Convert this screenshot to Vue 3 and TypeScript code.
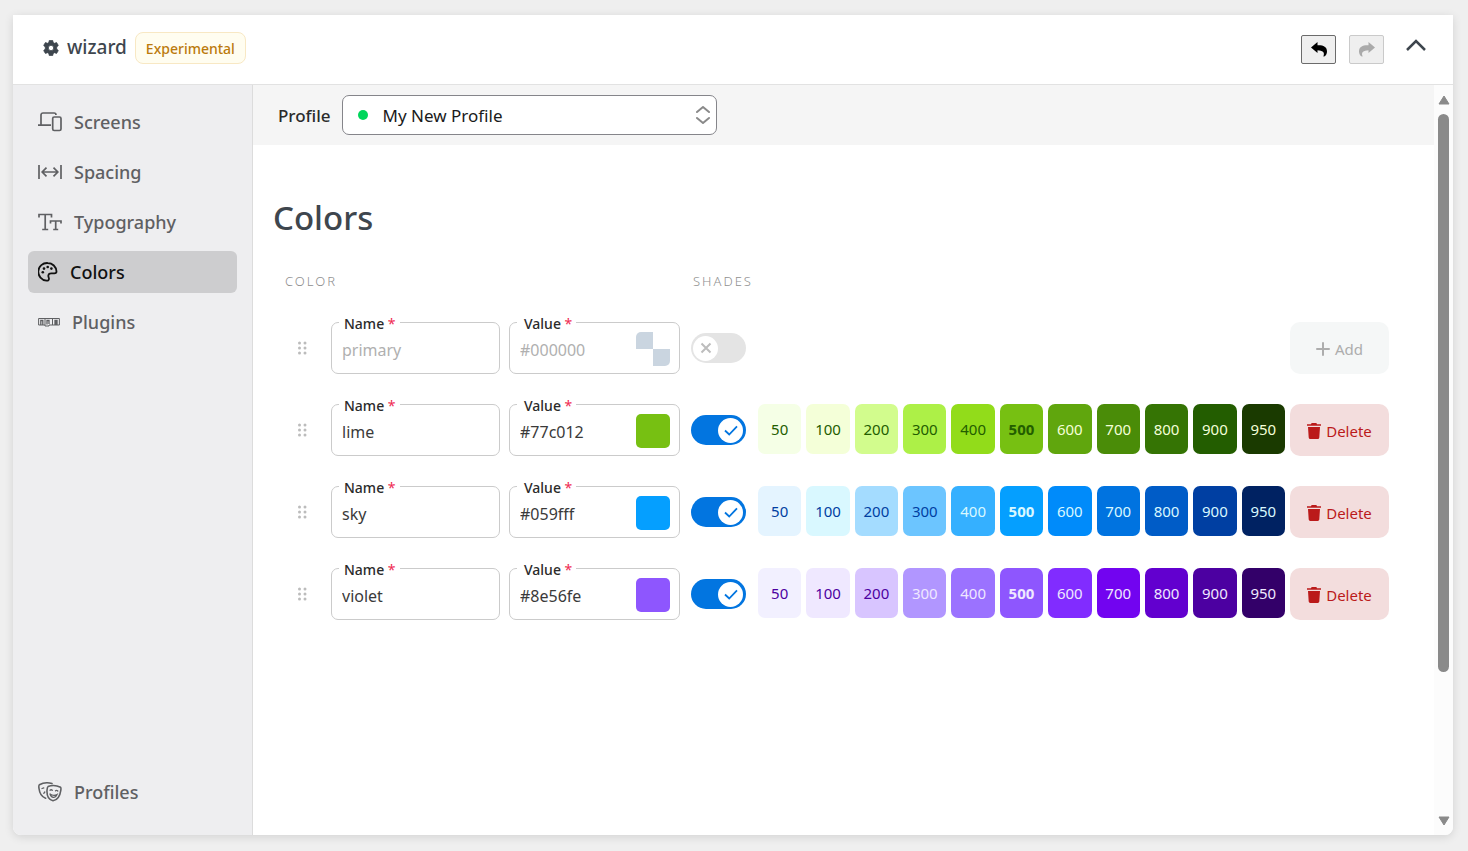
<script setup lang="ts">
import { ref } from 'vue'

interface Shade {
  label: string
  bg: string
  fg: string
}

interface ColorRow {
  name: string
  value: string
  shades: Shade[]
}

const steps = ['50', '100', '200', '300', '400', '500', '600', '700', '800', '900', '950']

function shades(colors: string[], dark: string, light: string, firstLight: number): Shade[] {
  return colors.map((bg, i) => ({ label: steps[i], bg, fg: i < firstLight ? dark : light }))
}

const rows = ref<ColorRow[]>([
  {
    name: 'lime',
    value: '#77c012',
    shades: shades(
      ['#f5ffe6', '#f4ffd8', '#d2fc8d', '#adf047', '#92dc1a', '#77c012', '#60a60d', '#4a8c08', '#357404', '#235d00', '#1a3a00'],
      '#235d00', '#f4ffd8', 6,
    ),
  },
  {
    name: 'sky',
    value: '#059fff',
    shades: shades(
      ['#e4f4ff', '#d9f8ff', '#a4dcff', '#6cc5ff', '#35b0ff', '#059fff', '#008bfa', '#0073e0', '#005cc7', '#003fa2', '#002262'],
      '#003fa2', '#d9f8ff', 4,
    ),
  },
  {
    name: 'violet',
    value: '#8e56fe',
    shades: shades(
      ['#f2f0ff', '#efe8ff', '#d8c5ff', '#b196ff', '#9b72ff', '#8e56fe', '#812cff', '#7204f0', '#6200cf', '#4c00a1', '#330069'],
      '#4c00a1', '#efe8ff', 3,
    ),
  },
])

const navItems = ['Screens', 'Spacing', 'Typography', 'Colors', 'Plugins']
const active = ref('Colors')
const draftName = ref('')
const draftValue = ref('')
const profile = ref('My New Profile')
</script>

<template>
  <div class="page">
    <div class="panel">
      <header class="top">
        <svg class="gear" viewBox="0 0 16 16" width="16" height="16">
          <path fill="currentColor" fill-rule="evenodd" stroke="currentColor" stroke-width=".8" stroke-linejoin="round" d="M6.300.4h3.400l.5 2.100 1.300.8 2.100-.7 1.700 2.900L13.700 7v2l1.600 1.500-1.700 2.900-2.100-.7-1.300.8-.5 2.100H6.300l-.5-2.100-1.300-.8-2.100.7L.7 10.500 2.300 9V7L.7 5.500l1.700-2.900 2.100.7 1.300-.8zM8 5.300a2.700 2.700 0 1 0 0 5.400 2.700 2.700 0 0 0 0-5.400z" />
        </svg>
        <span class="brand">wizard</span>
        <span class="badge">Experimental</span>
        <div class="actions">
          <button type="button" class="history" aria-label="Undo">
            <svg viewBox="0 0 16 16" width="16" height="16"><path fill="currentColor" d="M0 6.500 6.500 1v3.300C12 4 16 5.800 16 10.400c0 2.200-1 4-2.800 5.100-.5.300-1-.1-.7-.6C14 11.500 11.500 9.400 6.500 9.300V12z" /></svg>
          </button>
          <button type="button" class="history" aria-label="Redo" disabled>
            <svg viewBox="0 0 16 16" width="16" height="16"><path fill="currentColor" d="M16 6.500 9.500 1v3.300C4 4 0 5.800 0 10.400c0 2.200 1 4 2.800 5.100.5.300 1-.1.700-.6C2 11.500 4.500 9.400 9.500 9.300V12z" /></svg>
          </button>
          <button type="button" class="collapse" aria-label="Collapse">
            <svg viewBox="0 0 20 12" width="20" height="12"><path fill="none" stroke="currentColor" stroke-width="2.500" d="m1 11 9-9 9 9" /></svg>
          </button>
        </div>
      </header>

      <div class="body">
        <nav class="side">
          <a v-for="item in navItems" :key="item" href="#" class="link" :class="{ active: item === active }" @click.prevent="active = item">
            <svg v-if="item === 'Screens'" class="icon" viewBox="0 0 24 20" width="24" height="20" fill="none" stroke="currentColor" stroke-width="1.700">
              <path d="M3 13V3a2 2 0 0 1 2-2h11a2 2 0 0 1 2 2M0 13.200h13" />
              <rect x="14.700" y="5" width="8.300" height="13.500" rx="1.500" />
            </svg>
            <svg v-else-if="item === 'Spacing'" class="icon" viewBox="0 0 24 16" width="24" height="16" fill="none" stroke="currentColor" stroke-width="1.700">
              <path d="M1 1v14M23 1v14M4.500 8h15M8.500 3.700 4.200 8l4.300 4.300M15.500 3.700 19.800 8l-4.300 4.300" />
            </svg>
            <svg v-else-if="item === 'Typography'" class="icon" viewBox="0 0 24 18" width="24" height="18" fill="none" stroke="currentColor" stroke-width="1.700">
              <path d="M1 4.500V1.500h12.500v3M7.200 1.500v15M4.200 16.500h6M12.500 10.500V8H23v2.500M17.700 8v8.500M15.200 16.500h5" />
            </svg>
            <svg v-else-if="item === 'Colors'" class="icon" viewBox="0 0 20 20" width="20" height="20">
              <path fill="none" stroke="currentColor" stroke-width="1.800" d="M18.500 9.500C18.300 4.800 14.500 1 9.700 1a8.800 8.800 0 0 0-1.200 17.600c1.600.3 2.500-.5 2.500-1.800 0-1.200-1-2-.6-3.600.3-1.300 1.400-1.800 2.900-1.800h3c1.400 0 2.200-.6 2.200-1.900z" />
              <g fill="currentColor"><circle cx="4.800" cy="10.300" r="1.300" /><circle cx="6" cy="6.600" r="1.300" /><circle cx="9.700" cy="5" r="1.300" /><circle cx="13.400" cy="6.600" r="1.300" /></g>
            </svg>
            <svg v-else class="icon" viewBox="0 0 22 10" width="22" height="10" fill="none" stroke="currentColor">
              <path d="M.6 1.500h20.800v6.500H11V9H7V8H.6zM7 1.500V8M14.500 1.500V8" />
              <path stroke-width="1.300" d="M2.800 8V3.500h2V8M9 7.500V3.500h2V7M17 8V3.500h2V8M18 3.500V8" />
            </svg>
            <span>{{ item }}</span>
          </a>
          <a href="#" class="link last" @click.prevent>
            <svg class="icon" viewBox="0 0 24 20" width="24" height="20" fill="none" stroke="currentColor" stroke-width="1.600" stroke-linecap="round">
              <path d="M14 1.600C9.800.3 5.200.7 1.400 2.800.5 3.300.8 5 1 6.500 1.600 11.300 3.800 15 7.600 16.200" />
              <path d="M10 4.600c4.400-1.700 8.600-1.200 12.600.7.500.4.400 1.700.2 3-.8 5.700-3.500 9.700-7.800 10.500-4.400-1-6.300-5-6-10.500.1-1.500.2-3.200 1-3.700z" />
              <path stroke-width="1.300" d="M12 8.200q1.200-1 2.300 0M17.500 8.800q1.200-1 2.300.2M12 12q3.500 2.300 7 .5-1.400 3-3.600 2.900-2.400-.2-3.400-3.400M4 6.500l1.800-.6M5.800 11.300l1-1.300" />
            </svg>
            <span>Profiles</span>
          </a>
        </nav>

        <main class="main">
          <div class="content">
            <div class="profile-bar">
              <label for="profile">Profile</label>
              <div class="select-wrap">
                <span class="dot"></span>
                <select id="profile" v-model="profile"><option>My New Profile</option></select>
                <svg class="updown" viewBox="0 0 14 18" width="14" height="18" fill="none" stroke="currentColor" stroke-width="2" stroke-linecap="round" stroke-linejoin="round">
                  <path d="m1 6 6-5 6 5M1 12l6 5 6-5" />
                </svg>
              </div>
            </div>

            <section class="colors">
              <h1>Colors</h1>
              <div class="grid heads">
                <span class="head-color">Color</span>
                <span class="head-shades">Shades</span>
              </div>

              <div class="grid row">
                <svg class="grip" viewBox="0 0 9 14" width="9" height="14" fill="currentColor"><circle cx="1.500" cy="2" r="1.500" /><circle cx="7" cy="2" r="1.500" /><circle cx="1.500" cy="7" r="1.500" /><circle cx="7" cy="7" r="1.500" /><circle cx="1.500" cy="12" r="1.500" /><circle cx="7" cy="12" r="1.500" /></svg>
                <div class="field">
                  <label for="name-new">Name <em>*</em></label>
                  <input id="name-new" v-model="draftName" type="text" placeholder="primary" />
                </div>
                <div class="field value">
                  <label for="value-new">Value <em>*</em></label>
                  <input id="value-new" v-model="draftValue" type="text" placeholder="#000000" />
                  <span class="swatch empty"></span>
                </div>
                <label class="toggle">
                  <input type="checkbox" aria-label="Shades for new color" />
                  <span class="knob"><svg viewBox="0 0 12 12" width="12" height="12"><path fill="none" stroke="currentColor" stroke-width="2" d="m1.500 1.500 9 9M10.500 1.500l-9 9" /></svg></span>
                </label>
                <div class="shades"></div>
                <button type="button" class="act add" disabled>
                  <svg viewBox="0 0 14 14" width="14" height="14"><path fill="none" stroke="currentColor" stroke-width="2" stroke-linecap="round" d="M7 1v12M1 7h12" /></svg>
                  Add
                </button>
              </div>

              <div v-for="(row, i) in rows" :key="i" class="grid row">
                <svg class="grip" viewBox="0 0 9 14" width="9" height="14" fill="currentColor"><circle cx="1.500" cy="2" r="1.500" /><circle cx="7" cy="2" r="1.500" /><circle cx="1.500" cy="7" r="1.500" /><circle cx="7" cy="7" r="1.500" /><circle cx="1.500" cy="12" r="1.500" /><circle cx="7" cy="12" r="1.500" /></svg>
                <div class="field">
                  <label :for="'name-' + i">Name <em>*</em></label>
                  <input :id="'name-' + i" v-model="row.name" type="text" />
                </div>
                <div class="field value">
                  <label :for="'value-' + i">Value <em>*</em></label>
                  <input :id="'value-' + i" v-model="row.value" type="text" />
                  <span class="swatch" :style="{ background: row.value }"></span>
                </div>
                <label class="toggle on">
                  <input type="checkbox" checked :aria-label="'Shades for ' + row.name" />
                  <span class="knob"><svg viewBox="0 0 14 11" width="14" height="11"><path fill="none" stroke="currentColor" stroke-width="1.800" d="m1 5.500 4.200 4L13 1.300" /></svg></span>
                </label>
                <div class="shades">
                  <span v-for="s in row.shades" :key="s.label" class="shade" :class="{ base: s.label === '500' }" :style="{ background: s.bg, color: s.fg }">{{ s.label }}</span>
                </div>
                <button type="button" class="act delete" @click="rows.splice(i, 1)">
                  <svg viewBox="0 0 14 16" width="14" height="16"><path fill="currentColor" d="M0 1.200h4L4.600 0h4.800l.6 1.200h4v1.600H0zM1 4h12l-.7 10.500A1.600 1.600 0 0 1 10.700 16H3.300a1.600 1.600 0 0 1-1.600-1.500z" /></svg>
                  Delete
                </button>
              </div>
            </section>
          </div>

          <div class="scroll" aria-hidden="true">
            <svg viewBox="0 0 12 10" width="12" height="10"><path fill="currentColor" stroke="currentColor" stroke-linejoin="round" d="M6 1 11 9H1z" /></svg>
            <div class="track"><div class="thumb"></div></div>
            <svg viewBox="0 0 12 10" width="12" height="10"><path fill="currentColor" stroke="currentColor" stroke-linejoin="round" d="M6 9 11 1H1z" /></svg>
          </div>
        </main>
      </div>
    </div>
  </div>
</template>

<style>
body {
  margin: 0;
  background: #efefef;
}
</style>

<style scoped>
* {
  box-sizing: border-box;
}

.page {
  min-height: 100vh;
  padding: 15px 15px 16px 13px;
  display: flex;
  font-family: "Noto Sans", "Open Sans", sans-serif;
  color: #3e464e;
}

.panel {
  flex: 1;
  display: flex;
  flex-direction: column;
  background: #fff;
  border-radius: 0 0 8px 8px;
  box-shadow: 0 2px 10px rgba(0, 0, 0, 0.12);
  overflow: hidden;
}

.top {
  display: flex;
  align-items: center;
  height: 70px;
  padding: 0 27px 4px 30px;
  border-bottom: 1px solid #e2e2e2;
}

.brand {
  margin: 0 8px 2px 8px;
  font-size: 19px;
  font-weight: 500;
}

.badge {
  height: 32px;
  padding: 0 10px;
  border: 1px solid #f8e8c4;
  border-radius: 8px;
  background: #fffdf0;
  color: #bb7a0c;
  font-size: 14px;
  font-weight: 500;
  line-height: 31px;
}

.actions {
  display: flex;
  align-items: center;
  gap: 13px;
  margin-left: auto;
}

.history {
  display: flex;
  align-items: center;
  justify-content: center;
  width: 35px;
  height: 29px;
  margin-top: 3px;
  padding: 0;
  border: 1px solid #6b6b6b;
  border-radius: 2px;
  background: #efefef;
  color: #000;
}

.history:disabled {
  border-color: #cacaca;
  color: #aaa;
}

.collapse {
  margin: 0 0 5px 9px;
  padding: 0;
  border: 0;
  background: none;
  color: #3e464e;
}

.collapse svg {
  display: block;
}

.body {
  flex: 1;
  display: flex;
}

.side {
  flex: none;
  display: flex;
  flex-direction: column;
  gap: 8px;
  width: 240px;
  padding: 16px 15px 22px;
  border-right: 1px solid #dcdcdc;
  background: #eeeef0;
}

.link {
  display: flex;
  align-items: center;
  gap: 12px;
  height: 42px;
  padding: 0 10px;
  border-radius: 6px;
  color: #5f6063;
  font-size: 18px;
  font-weight: 500;
  line-height: 24px;
  text-decoration: none;
}

.link span {
  margin-bottom: 1px;
}

.link.active {
  background: #cdcdcf;
  color: #111;
}

.link.last {
  margin-top: auto;
}

.main {
  flex: 1;
  display: flex;
  min-width: 0;
}

.content {
  flex: 1;
  min-width: 0;
}

.profile-bar {
  display: flex;
  align-items: center;
  gap: 11px;
  height: 60px;
  padding-left: 25px;
  background: #f5f5f5;
  color: #2b2b2b;
  font-size: 17px;
  font-weight: 500;
}

.select-wrap {
  position: relative;
  width: 375px;
}

.select-wrap select {
  display: block;
  width: 100%;
  height: 40px;
  padding: 0 40px;
  border: 1px solid #85858a;
  border-radius: 7px;
  appearance: none;
  background: #fff;
  color: #1a1a1a;
  font: 400 17px "Noto Sans", sans-serif;
}

.dot {
  position: absolute;
  top: 15px;
  left: 16px;
  width: 10px;
  height: 10px;
  border-radius: 50%;
  background: #00d65b;
}

.updown {
  position: absolute;
  top: 11px;
  right: 7px;
  color: #8a8a8a;
}

.colors {
  padding: 46px 45px 0 20px;
}

h1 {
  margin: 0;
  font-size: 33px;
  font-weight: 500;
  line-height: 53px;
}

.grid {
  display: grid;
  grid-template-columns: 48px 179px 180px 66px 1fr 99px;
  align-items: center;
}

.heads {
  margin: 27px 0 31px;
  color: #8f8f8f;
  font-size: 13px;
  font-weight: 300;
  line-height: 20px;
  letter-spacing: 2px;
  text-transform: uppercase;
}

.head-color {
  grid-column: 1 / 4;
  padding-left: 12px;
}

.head-shades {
  grid-column: 4 / 6;
  padding-left: 13px;
}

.row {
  height: 52px;
  margin-bottom: 30px;
}

.grip {
  margin-left: 25px;
  color: #bcbcbc;
}

.field {
  position: relative;
  margin-left: 10px;
}

.field.value {
  margin-left: 9px;
}

.field label {
  position: absolute;
  top: -8px;
  left: 8px;
  padding: 0 4px 0 5px;
  background: #fff;
  color: #2b2b2b;
  font-size: 14px;
  font-weight: 500;
  line-height: 20px;
}

.field.value label {
  padding: 0 4px 0 7px;
}

.field em {
  color: #ef2b52;
  font-style: normal;
  font-weight: 400;
}

.field input {
  display: block;
  width: 100%;
  height: 52px;
  padding: 4px 10px 0;
  border: 1px solid #cbcbcb;
  border-radius: 7px;
  background: #fff;
  color: #3a3a3a;
  font: 400 16px "Noto Sans", sans-serif;
}

.field input::placeholder {
  color: #b0b0b0;
}

.swatch {
  position: absolute;
  top: 10px;
  right: 10px;
  width: 34px;
  height: 34px;
  border-radius: 5px;
}

.swatch.empty {
  background: conic-gradient(#fff 25%, #cad5e0 0 50%, #fff 0 75%, #cad5e0 0);
}

.toggle {
  display: flex;
  align-items: center;
  width: 55px;
  height: 30px;
  margin-left: 11px;
  padding: 0 2px;
  border-radius: 15px;
  background: #e4e4e4;
  color: #bdbdbd;
}

.toggle.on {
  justify-content: flex-end;
  padding-right: 3px;
  background: #0275e0;
  color: #0275e0;
}

.toggle input {
  width: 0;
  height: 0;
  margin: 0;
  appearance: none;
}

.knob {
  display: flex;
  align-items: center;
  justify-content: center;
  width: 25px;
  height: 25px;
  border-radius: 50%;
  background: #fff;
}

.shades {
  display: flex;
  gap: 5px;
  min-width: 0;
  margin: 0 5px 2px 12px;
}

.shade {
  flex: 1;
  height: 50px;
  border-radius: 7px;
  font-size: 15px;
  line-height: 50px;
  text-align: center;
}

.shade.base {
  font-weight: 700;
}

.act {
  display: flex;
  align-items: center;
  justify-content: center;
  gap: 5px;
  height: 52px;
  padding: 2px 0 0;
  border: 0;
  border-radius: 10px;
  font: 400 15px "Noto Sans", sans-serif;
}

.act.add {
  background: #f5f7f7;
  color: #adadad;
}

.act.delete {
  background: #f3dddd;
  color: #bb1a1a;
}

.scroll {
  display: flex;
  flex-direction: column;
  align-items: center;
  width: 19px;
  padding: 10px 0 9px;
  background: #fcfcfc;
  color: #8a8a8a;
}

.track {
  flex: 1;
  width: 11px;
  padding: 9px 0 5px;
}

.thumb {
  width: 11px;
  height: 80%;
  border-radius: 6px;
  background: #8a8a8a;
}
</style>
